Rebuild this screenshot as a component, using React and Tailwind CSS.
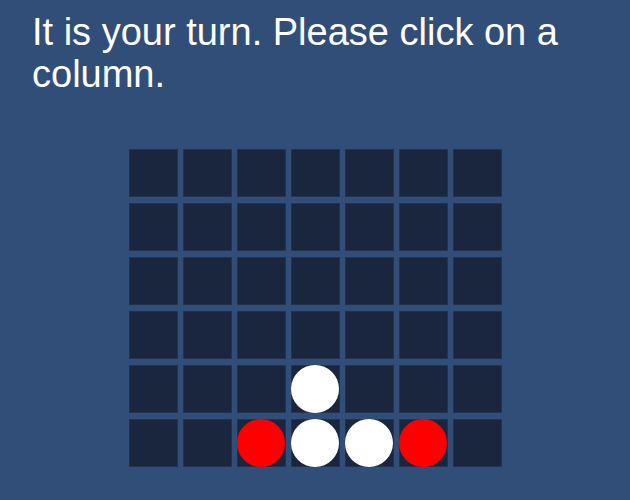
import React from 'react';

// Board state, top row first. 0 = empty, 1 = player (white), 2 = computer (red)
const BOARD = [
  [0, 0, 0, 0, 0, 0, 0],
  [0, 0, 0, 0, 0, 0, 0],
  [0, 0, 0, 0, 0, 0, 0],
  [0, 0, 0, 0, 0, 0, 0],
  [0, 0, 0, 1, 0, 0, 0],
  [0, 0, 2, 1, 1, 2, 0],
];

function Cell({ value }) {
  return (
    <div className="w-[49px] h-[48px] bg-[#19263d] border border-[#22324f] flex items-center justify-center">
      {value === 1 && <div className="w-[48px] h-[48px] rounded-full bg-white shrink-0" />}
      {value === 2 && <div className="w-[48px] h-[48px] rounded-full bg-[#ff0000] shrink-0" />}
    </div>
  );
}

export default function App() {
  return (
    <div
      className="w-[630px] h-[500px] bg-[#314e79] flex flex-col overflow-hidden"
      style={{ fontFamily: '"Liberation Sans", Arial, sans-serif' }}
    >
      <p className="px-[32px] pt-[11px] text-[38px] leading-[42px] text-white">
        It is your turn. Please click on a column.
      </p>

      <div className="mt-[54px] mx-auto grid grid-cols-7 gap-x-[5px] gap-y-[6px]">
        {BOARD.map((row, r) =>
          row.map((v, c) => <Cell key={`${r}-${c}`} value={v} />)
        )}
      </div>
    </div>
  );
}
